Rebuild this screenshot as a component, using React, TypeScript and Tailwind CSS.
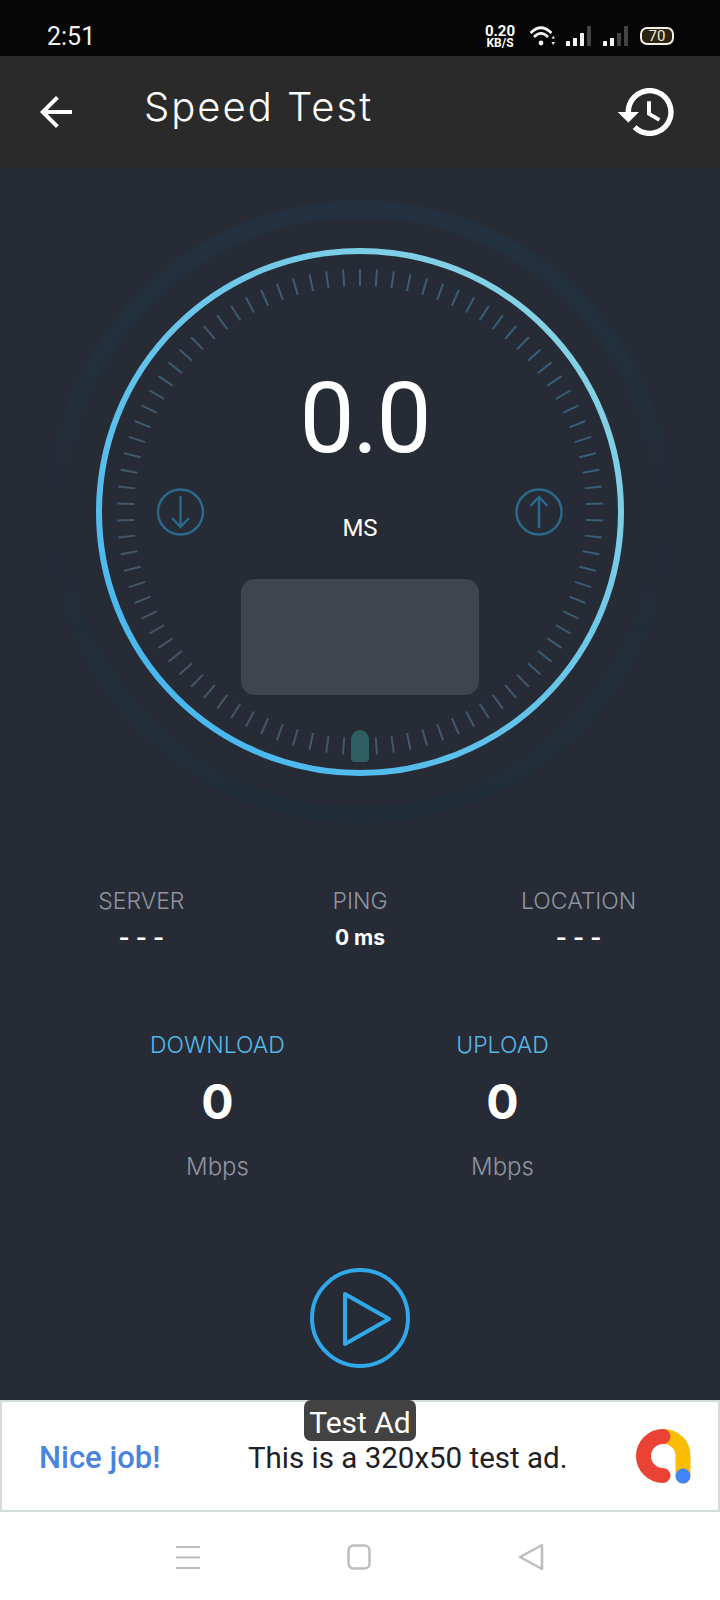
import React from 'react';

const roboto = { fontFamily: '"Roboto", "Liberation Sans", sans-serif' };

// 90 dial marks, one every 4 degrees
const TICKS = Array.from({ length: 90 }, (_, i) => (i * 4 * Math.PI) / 180);

const SignalBars: React.FC<{ lit: number }> = ({ lit }) => {
    const bars = [
        { x: 0, h: 5 },
        { x: 7, h: 8 },
        { x: 14, h: 13 },
        { x: 21, h: 20 },
    ];
    return (
        <svg width="25" height="20" viewBox="0 0 25 20">
            {bars.map((bar, i) => (
                <rect
                    key={bar.x}
                    x={bar.x}
                    y={20 - bar.h}
                    width="4"
                    height={bar.h}
                    rx="0.5"
                    fill={i < lit ? '#f5f5f5' : '#444444'}
                />
            ))}
        </svg>
    );
};

const StatusBar: React.FC = () => (
    <div className="h-14 bg-[#060606] flex items-center pl-[47px] pr-[46px] pt-[17px] pb-[1px] text-[#f0f0f0]" style={roboto}>
        <span className="text-[25px] leading-none">2:51</span>
        <div className="ml-auto flex items-center">
            <div className="w-[32px] flex flex-col items-center font-bold text-white">
                <span className="text-[15px] leading-[13px]">0.20</span>
                <span className="text-[12px] leading-[10px]">KB/S</span>
            </div>
            <svg className="ml-[14px]" width="25" height="22" viewBox="0 0 25 22" fill="none" stroke="#f5f5f5" strokeWidth="2.6">
                <path d="M0.500 8Q11 -2.500 21.500 8" />
                <path d="M4 12Q11 5 18 12" />
                <circle cx="11" cy="18" r="2.400" fill="#f5f5f5" stroke="none" />
                <path d="M21.500 13.500H25L23.200 11zM21.500 17H25L23.200 20z" fill="#f5f5f5" stroke="none" />
            </svg>
            <div className="ml-[11px]">
                <SignalBars lit={3} />
            </div>
            <div className="ml-[12px]">
                <SignalBars lit={2} />
            </div>
            <div className="ml-[12px] w-[34px] h-[18px] rounded-[7px] border-2 border-[#f3efe2] bg-[#2a2413] flex items-center justify-center text-[15px] leading-none text-[#eee8d5]">
                70
            </div>
        </div>
    </div>
);

const AppBar: React.FC = () => (
    <div className="h-[112px] bg-[#2a2a2a] flex items-center pl-8 pr-[41px] text-white">
        <svg width="48" height="48" viewBox="0 0 24 24" fill="currentColor">
            <path d="M20 11H7.83l5.59-5.59L12 4l-8 8 8 8 1.41-1.41L7.83 13H20v-2z" />
        </svg>
        <h1
            className="ml-[64px] text-[40px] leading-none font-light tracking-[2px] -mt-[10px]"
            style={{ fontFamily: '"Inter", "Liberation Sans", sans-serif' }}
        >
            Speed Test
        </h1>
        <svg className="ml-auto" width="64" height="64" viewBox="0 0 24 24" fill="currentColor">
            <path d="M13 3c-4.97 0-9 4.03-9 9H1l3.89 3.89.07.14L9 12H6c0-3.87 3.13-7 7-7s7 3.13 7 7-3.13 7-7 7c-1.93 0-3.68-.79-4.94-2.06l-1.42 1.42C8.27 19.99 10.51 21 13 21c4.97 0 9-4.03 9-9s-4.03-9-9-9zm-1 5v5l4.28 2.54.72-1.21-3.5-2.08V8H12z" />
        </svg>
    </div>
);

const GaugeDial: React.FC = () => (
    <svg className="absolute inset-0" width="720" height="688" viewBox="0 0 720 688" fill="none">
        <defs>
            <linearGradient id="halo" gradientUnits="userSpaceOnUse" x1="0" y1="32" x2="0" y2="656">
                <stop offset="0" stopColor="#223040" />
                <stop offset="0.28" stopColor="#22303c" />
                <stop offset="0.48" stopColor="#262b36" />
                <stop offset="0.54" stopColor="#262b36" />
                <stop offset="0.74" stopColor="#222e3a" />
                <stop offset="1" stopColor="#212e3a" />
            </linearGradient>
            <linearGradient id="ring" gradientUnits="userSpaceOnUse" x1="150" y1="560" x2="570" y2="130">
                <stop offset="0" stopColor="#45b6ef" />
                <stop offset="1" stopColor="#88d3e4" />
            </linearGradient>
            <linearGradient id="marks" gradientUnits="userSpaceOnUse" x1="130" y1="570" x2="590" y2="120">
                <stop offset="0" stopColor="#465464" />
                <stop offset="1" stopColor="#336080" />
            </linearGradient>
        </defs>

        <circle cx="360" cy="344" r="303" stroke="url(#halo)" strokeWidth="17" />
        <circle cx="360" cy="344" r="261" stroke="url(#ring)" strokeWidth="6" />

        <path d="M351 571a9 9 0 0 1 18 0v19a4 4 0 0 1-4 4h-10a4 4 0 0 1-4-4z" fill="#2d5f63" />

        <g stroke="url(#marks)" strokeWidth="2">
            {TICKS.map((a) => (
                <line
                    key={a}
                    x1={360 + 226 * Math.sin(a)}
                    y1={344 - 226 * Math.cos(a)}
                    x2={360 + 243 * Math.sin(a)}
                    y2={344 - 243 * Math.cos(a)}
                />
            ))}
        </g>

        {/* download and upload markers */}
        <g stroke="#2a6a8e" strokeWidth="2.400">
            <circle cx="180.500" cy="344" r="22.500" />
            <path d="M180.500 328V359M172 350l8.500 9 8.500-9" />
            <circle cx="539" cy="344" r="22.500" />
            <path d="M539 329V360M530.500 338l8.500-9 8.500 9" />
        </g>
    </svg>
);

const Gauge: React.FC = () => (
    <div className="relative h-[688px] flex flex-col items-center pt-[202px] text-white">
        <GaugeDial />
        <span className="relative pl-[9px] text-[98px] leading-[98px] tracking-[-2px]" style={roboto}>
            0.0
        </span>
        <span className="relative mt-[44px] h-8 text-[24px] leading-8" style={roboto}>
            MS
        </span>
        <div className="relative mt-[35px] w-[238px] h-[116px] rounded-[14px] bg-[#40444e]" />
    </div>
);

const InfoCell: React.FC<{ label: string; value: string; bold?: boolean }> = ({ label, value, bold }) => (
    <div className="flex flex-col items-center">
        <span className="h-8 text-[23px] leading-8 font-light text-[#8f94a0]">{label}</span>
        <span className={`mt-[7px] h-7 leading-7 text-white ${bold ? 'text-[21px] font-bold' : 'text-[24px] font-semibold'}`}>
            {value}
        </span>
    </div>
);

const SpeedCell: React.FC<{ label: string }> = ({ label }) => (
    <div className="flex flex-col items-center">
        <span className="h-8 text-[23px] leading-8 font-light text-[#55b8e6]">{label}</span>
        <span className="mt-[13px] h-14 text-[48px] leading-[56px] font-bold text-white">0</span>
        <span className="mt-[21px] h-8 text-[24px] leading-8 font-light text-[#8f94a0]">Mbps</span>
    </div>
);

const PlayButton: React.FC = () => (
    <button className="block mx-auto mt-[85px]" aria-label="Start test">
        <svg width="100" height="100" viewBox="0 0 100 100" fill="none" stroke="#2fa9ea" strokeWidth="4" strokeLinejoin="round">
            <circle cx="50" cy="50" r="48" />
            <path d="M35 26L79 51L35 76Z" />
        </svg>
    </button>
);

const AdBanner: React.FC = () => (
    <div className="relative h-[112px] bg-white border-2 border-[#d3dbdc] flex items-center pl-[37px] pr-[23px]" style={roboto}>
        <div className="absolute -top-[2px] left-[302px] w-[112px] h-[41px] rounded-[7px] bg-[#424242] text-white text-[30px] leading-[45px] text-center">
            Test Ad
        </div>
        <span className="w-[209px] mt-1 text-[31px] font-medium text-[#4a84dc]">Nice job!</span>
        <span className="flex-1 mt-1 text-[29.500px] text-[#202124]">This is a 320x50 test ad.</span>
        <svg width="64" height="64" viewBox="0 0 64 64" fill="none" strokeWidth="15" strokeLinecap="round">
            <path d="M32 12.500C44 12.500 52 21 52 32V52" stroke="#fbbc04" />
            <path d="M32 12.500A19.500 19.500 0 0 0 32 51.500" stroke="#ea4335" />
            <circle cx="52" cy="52" r="7.500" fill="#4285f4" />
        </svg>
    </div>
);

const NavBar: React.FC = () => (
    <div className="h-[88px] bg-white flex items-center justify-center gap-[147px] pt-[1px]">
        <svg width="24" height="24" viewBox="0 0 24 24" stroke="#bdbdbd" strokeWidth="2">
            <path d="M0 2H24M0 12.500H24M0 23H24" />
        </svg>
        <svg width="24" height="26" viewBox="0 0 24 26" fill="none" stroke="#bdbdbd" strokeWidth="2.500">
            <rect x="1.500" y="1.500" width="21" height="23" rx="5" />
        </svg>
        <svg width="26" height="28" viewBox="0 0 26 28" fill="none" stroke="#bdbdbd" strokeWidth="2.500" strokeLinejoin="round">
            <path d="M24 2V26L2 14Z" />
        </svg>
    </div>
);

const App: React.FC = () => (
    <div className="w-[720px] h-[1600px] flex flex-col overflow-hidden">
        <StatusBar />
        <AppBar />
        <main className="flex-1 bg-[#272b35]" style={{ fontFamily: '"Inter", "Liberation Sans", sans-serif' }}>
            <Gauge />
            <div className="mt-[29px] px-8 grid grid-cols-3">
                <InfoCell label="SERVER" value="- - -" />
                <InfoCell label="PING" value="0 ms" bold />
                <InfoCell label="LOCATION" value="- - -" />
            </div>
            <div className="mt-[77px] px-[75px] grid grid-cols-2">
                <SpeedCell label="DOWNLOAD" />
                <SpeedCell label="UPLOAD" />
            </div>
            <PlayButton />
        </main>
        <AdBanner />
        <NavBar />
    </div>
);

export default App;
